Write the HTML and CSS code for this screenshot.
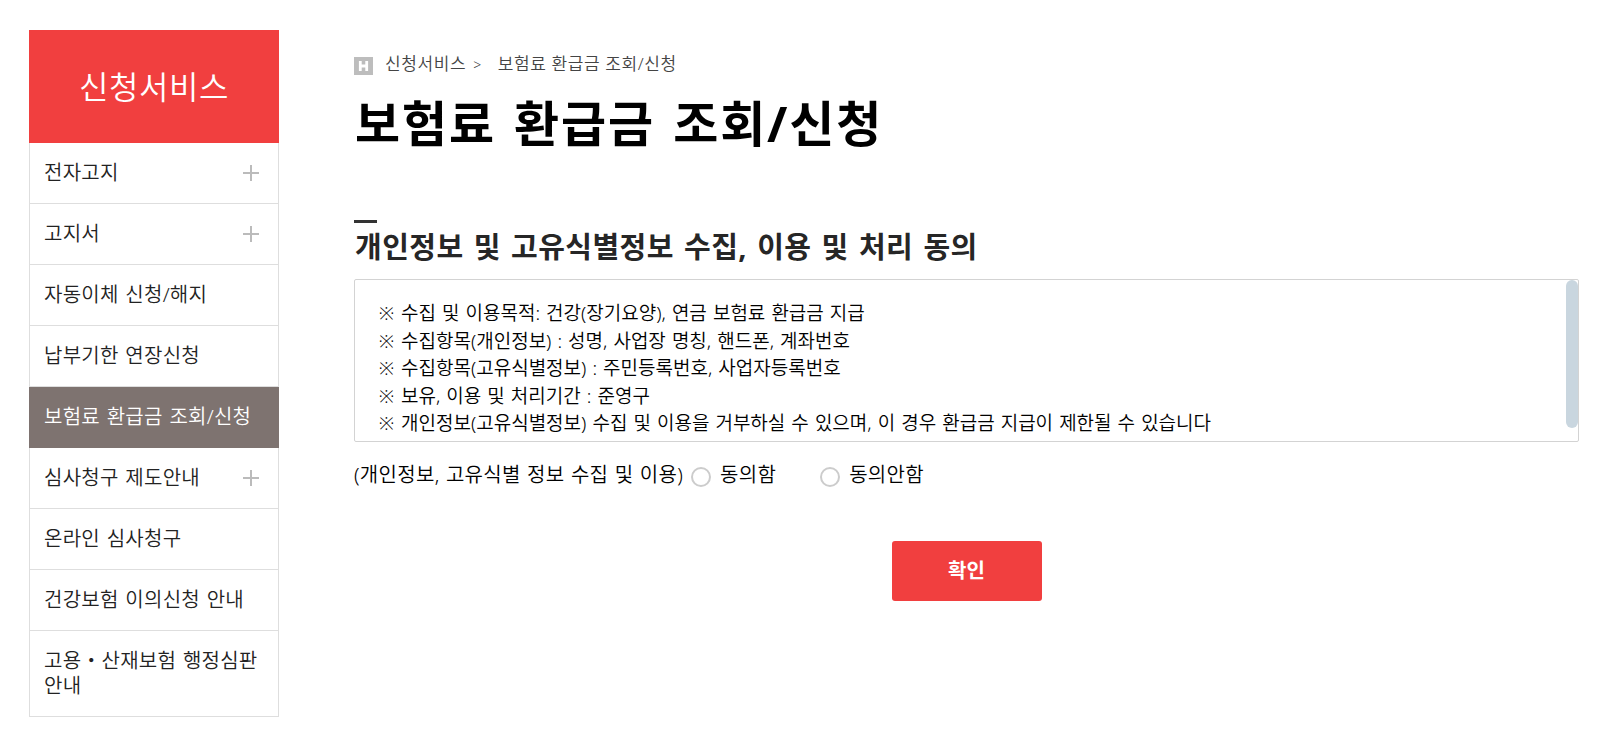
FILE: index.html
```html
<!DOCTYPE html>
<html lang="ko">
<head>
    <meta charset="UTF-8">
    <meta name="viewport" content="width=device-width, initial-scale=1.0">
    <title>보험료 환급금 조회/신청</title>
    <link rel="stylesheet" href="styles.css">
</head>
<body>
    <div class="container">
        <nav class="sidebar">
            <h2>신청서비스</h2>
            <ul>
                <li class="more"><a>전자고지</a></li>
                <li class="more"><a>고지서</a></li>
                <li><a>자동이체 신청/해지</a></li>
                <li><a>납부기한 연장신청</a></li>
                <li class="active"><a>보험료 환급금 조회/신청</a></li>
                <li class="more"><a>심사청구 제도안내</a></li>
                <li><a>온라인 심사청구</a></li>
                <li><a>건강보험 이의신청 안내</a></li>
                <li><a>고용・산재보험 행정심판<br>안내</a></li>
            </ul>
        </nav>

        <main class="content">
            <div class="breadcrumb">
                <svg class="home" width="19" height="18" viewBox="0 0 19 18">
                    <rect width="19" height="18" fill="#bdbdbd"/>
                    <path d="M6.3 4v10M12.7 4v10M6 9h7" stroke="#fff" stroke-width="2.8" fill="none"/>
                </svg>
                <span class="crumb">신청서비스</span>
                <span class="arrow">&gt;</span>
                <span class="crumb">보험료 환급금 조회/신청</span>
            </div>
            <h1>보험료 환급금 조회/신청</h1>

            <h3>개인정보 및 고유식별정보 수집, 이용 및 처리 동의</h3>
            <div class="terms">
                <div class="terms-text">
                    <p><span class="mark">※</span>수집 및 이용목적: 건강(장기요양), 연금 보험료 환급금 지급</p>
                    <p><span class="mark">※</span>수집항목(개인정보) : 성명, 사업장 명칭, 핸드폰, 계좌번호</p>
                    <p><span class="mark">※</span>수집항목(고유식별정보) : 주민등록번호, 사업자등록번호</p>
                    <p><span class="mark">※</span>보유, 이용 및 처리기간 : 준영구</p>
                    <p><span class="mark">※</span>개인정보(고유식별정보) 수집 및 이용을 거부하실 수 있으며, 이 경우 환급금 지급이 제한될 수 있습니다</p>
                </div>
                <div class="scroll-thumb"></div>
            </div>

            <form class="agree">
                <span class="agree-title">(개인정보, 고유식별 정보 수집 및 이용)</span>
                <label><input type="radio" name="agree" value="Y"><span>동의함</span></label>
                <label><input type="radio" name="agree" value="N"><span>동의안함</span></label>
            </form>

            <div class="btn-area">
                <button type="button">확인</button>
            </div>
        </main>
    </div>
</body>
</html>
```
FILE: styles.css
```css
* {
    box-sizing: border-box;
}
body {
    margin: 0;
    background: #fff;
    color: #000;
    font-family: "Noto Sans", "Noto Sans CJK KR", sans-serif;
    font-weight: 350;
}
h1, h2, h3, p, ul {
    margin: 0;
    padding: 0;
}
.container {
    display: flex;
    align-items: flex-start;
    padding: 30px 33px 0 29px;
}

/* left menu */
.sidebar {
    width: 250px;
    flex: none;
}
.sidebar h2 {
    height: 113px;
    line-height: 113px;
    background: #f13f3f;
    color: #fff;
    font-size: 32px;
    font-weight: 350;
    letter-spacing: 0.6px;
    text-align: center;
}
.sidebar ul {
    list-style: none;
}
.sidebar li {
    display: flex;
    justify-content: space-between;
    align-items: flex-start;
    min-height: 61px;
    padding: 17px 19px 17px 14px;
    border: 1px solid #dedede;
    border-top: none;
    color: #222;
    font-size: 20px;
    line-height: 25px;
    letter-spacing: 0.25px;
    word-spacing: 1.3px;
    white-space: nowrap;
}
.sidebar li:last-child {
    height: 86px;
}
.sidebar li.active {
    background: #7e7370;
    border-color: #7e7370;
    color: #fff;
}
.sidebar li.more::after {
    content: "";
    width: 16px;
    height: 16px;
    margin-top: 5px;
    background:
        linear-gradient(#bbb, #bbb) center / 16px 2px no-repeat,
        linear-gradient(#bbb, #bbb) center / 2px 16px no-repeat;
}

/* content */
.content {
    flex: 1;
    padding: 22px 0 0 75px;
}
.breadcrumb {
    display: flex;
    align-items: center;
    height: 24px;
    color: #444;
    font-size: 17px;
    line-height: 24px;
    letter-spacing: 0.6px;
}
.home {
    margin: 3px 12px 0 0;
}
.arrow {
    margin: 2px 16px 0 7px;
    font-size: 14px;
}
h1 {
    height: 144px;
    padding: 13px 0 0 1px;
    font-size: 49px;
    font-weight: 700;
    line-height: 68px;
    letter-spacing: 1.9px;
    word-spacing: 3.5px;
}
h3 {
    height: 59px;
    padding-left: 1px;
    color: #262626;
    font-size: 29px;
    font-weight: 700;
    line-height: 48px;
    letter-spacing: 0.45px;
    word-spacing: 2.2px;
}
h3::before {
    content: "";
    display: block;
    width: 23px;
    height: 3px;
    margin-left: -1px;
    background: #333;
}
.terms {
    display: flex;
    justify-content: space-between;
    height: 163px;
    border: 1px solid #d3d3d3;
    border-radius: 2px;
    overflow: hidden;
}
.terms-text {
    padding: 20px 0 0 24px;
    font-size: 19px;
    line-height: 27.5px;
    word-spacing: 1.1px;
    white-space: nowrap;
}
.mark {
    display: inline-block;
    width: 22px;
    font-size: 18px;
}
.scroll-thumb {
    width: 12px;
    height: 148px;
    border-radius: 6px;
    background: #c9d6df;
}
.agree {
    display: flex;
    height: 99px;
    padding-top: 18px;
    font-size: 20px;
    line-height: 30px;
    letter-spacing: 0.3px;
    word-spacing: 0.9px;
}
.agree label {
    display: flex;
    margin-left: 8px;
}
.agree label + label {
    margin-left: 44px;
}
.agree input {
    appearance: none;
    width: 20px;
    height: 20px;
    margin: 7px 9px 0 0;
    border: 2px solid #ccc;
    border-radius: 50%;
    background: #fff;
}
.btn-area {
    text-align: center;
}
button {
    width: 150px;
    height: 60px;
    padding: 0 0 3px;
    border: none;
    border-radius: 3px;
    background: #f13f3f;
    color: #fff;
    font-family: inherit;
    font-size: 20px;
    font-weight: 700;
}
```
